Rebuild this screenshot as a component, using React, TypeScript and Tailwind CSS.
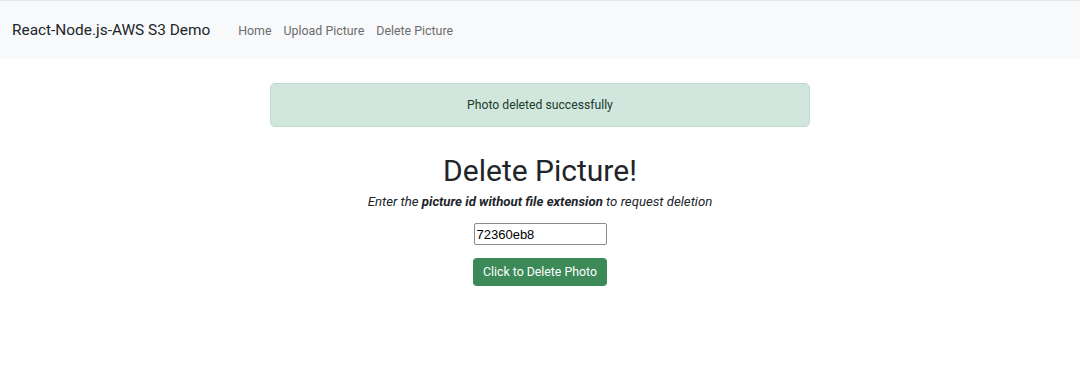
import React from "react";

export default function App() {
  return (
    <div className="w-[1080px] h-[372px] bg-white" style={{ fontFamily: "Roboto, 'Noto Sans', sans-serif" }}>
      <nav className="h-[59px] bg-[#f8f9fa] border-t border-[#e6e8ea] flex items-center pl-[12px]">
        <span className="text-[15.4px] text-[#212529] pt-[2px]">React-Node.js-AWS S3 Demo</span>
        <div className="flex items-center ml-[28px] gap-[12px] text-[12.4px] text-[#6c6d6e] pt-[2px]">
          <span>Home</span>
          <span>Upload Picture</span>
          <span>Delete Picture</span>
        </div>
      </nav>
      <div className="flex flex-col items-center">
        <div className="mt-[24px] w-[540px] h-[44px] rounded-[5px] bg-[#d1e7dd] border border-[#bcdccd] flex items-center justify-center text-[12.2px] text-[#1c3a2b]">
          Photo deleted successfully
        </div>
        <h1 className="mt-[26px] text-[30px] leading-[36px] text-[#212529]">Delete Picture!</h1>
        <p className="mt-[4px] text-[13.2px] italic text-[#212529] leading-[18px]">
          Enter the <b>picture id without file extension</b> to request deletion
        </p>
        <input
          readOnly
          value="72360eb8"
          className="mt-[12px] w-[133px] h-[22px] border border-[#8a8a8a] rounded-[2px] px-[2px] text-[13px] text-black outline-none"
          style={{ fontFamily: "Arial, 'Liberation Sans', sans-serif" }}
        />
        <button className="mt-[13px] w-[134px] h-[28px] rounded-[4px] bg-[#3b8a58] text-white text-[12.3px]">
          Click to Delete Photo
        </button>
      </div>
    </div>
  );
}
